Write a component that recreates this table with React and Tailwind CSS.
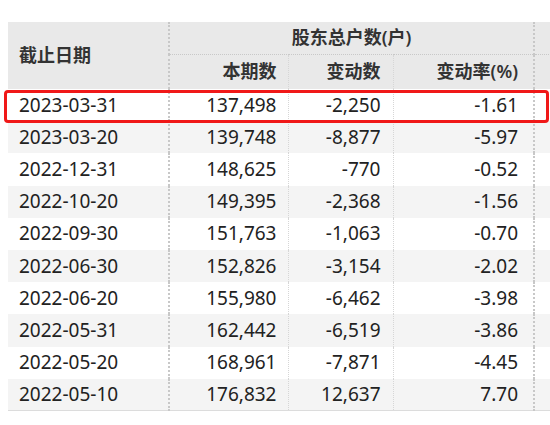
import React from "react";

const rows = [
  ["2023-03-31", "137,498", "-2,250", "-1.61"],
  ["2023-03-20", "139,748", "-8,877", "-5.97"],
  ["2022-12-31", "148,625", "-770", "-0.52"],
  ["2022-10-20", "149,395", "-2,368", "-1.56"],
  ["2022-09-30", "151,763", "-1,063", "-0.70"],
  ["2022-06-30", "152,826", "-3,154", "-2.02"],
  ["2022-06-20", "155,980", "-6,462", "-3.98"],
  ["2022-05-31", "162,442", "-6,519", "-3.86"],
  ["2022-05-20", "168,961", "-7,871", "-4.45"],
  ["2022-05-10", "176,832", "12,637", "7.70"],
];

const App = () => {
  return (
    <div className="relative w-[550px] h-[425px] bg-white overflow-hidden pt-[22px] pl-[8px] text-[#222]" style={{ fontFamily: '"Noto Sans", "Noto Sans CJK SC", sans-serif' }}>
      <table className="table-fixed border-collapse w-[543px] border-b border-[#dcdcdc]">
        <colgroup>
          <col className="w-[161px]" />
          <col className="w-[119px]" />
          <col className="w-[105px]" />
          <col className="w-[141px]" />
          <col className="w-[17px]" />
        </colgroup>
        <thead className="bg-[#e9e9e9] text-[18px] font-semibold text-[#333]">
          <tr className="h-[32px]">
            <th rowSpan={2} className="text-left pl-[11px] font-semibold border-r-2 border-dotted border-[#c8c8c8]">截止日期</th>
            <th colSpan={3} className="text-center font-semibold border-b border-dotted border-[#c8c8c8]">股东总户数(户)</th>
            <th className="border-l-2 border-b border-dotted border-[#c8c8c8]"></th>
          </tr>
          <tr className="h-[35px]">
            <th className="text-right pr-[11px] font-semibold border-r border-dotted border-[#d6d6d6]">本期数</th>
            <th className="text-right pr-[12px] font-semibold border-r border-dotted border-[#d6d6d6]">变动数</th>
            <th className="text-right pr-[15px] font-semibold">变动率(%)</th>
            <th className="border-l-2 border-dotted border-[#c8c8c8]"></th>
          </tr>
        </thead>
        <tbody className="text-[19px]">
          {rows.map((r, i) => (
            <tr key={r[0]} className={i % 2 === 1 ? "h-[32.2px] bg-[#f4f4f4]" : "h-[32.2px] bg-white"}>
              <td className="pl-[11px] leading-none border-r-2 border-dotted border-[#c8c8c8]">{r[0]}</td>
              <td className="text-right pr-[11px] leading-none border-r border-dotted border-[#d6d6d6]">{r[1]}</td>
              <td className="text-right pr-[12px] leading-none border-r border-dotted border-[#d6d6d6]">{r[2]}</td>
              <td className="text-right pr-[15px] leading-none">{r[3]}</td>
              <td className="border-l-2 border-dotted border-[#c8c8c8]"></td>
            </tr>
          ))}
        </tbody>
      </table>
      <div className="absolute left-[4px] top-[90px] w-[545px] h-[33px] border-[3px] border-[#f01818] rounded-[4px]"></div>
    </div>
  );
};

export default App;
